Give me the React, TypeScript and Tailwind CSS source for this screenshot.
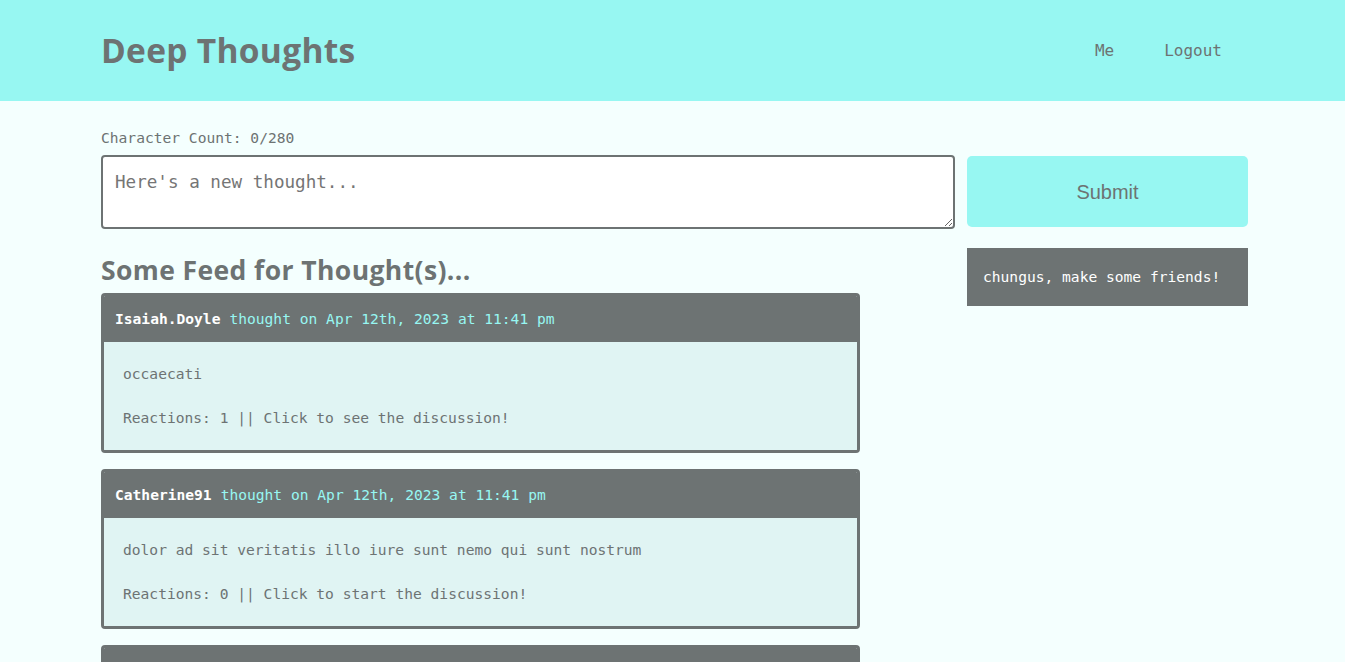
const thoughts = [
  {
    username: "Isaiah.Doyle",
    createdAt: "Apr 12th, 2023 at 11:41 pm",
    text: "occaecati",
    reactions: 1,
  },
  {
    username: "Catherine91",
    createdAt: "Apr 12th, 2023 at 11:41 pm",
    text: "dolor ad sit veritatis illo iure sunt nemo qui sunt nostrum",
    reactions: 0,
  },
  {
    username: "Kody_Hauck",
    createdAt: "Apr 12th, 2023 at 11:41 pm",
    text: "quia eos dolorum",
    reactions: 2,
  },
];

const mono = "font-['DejaVu_Sans_Mono','Liberation_Mono',monospace]";
const heading = "font-['Open_Sans','Lato',sans-serif]";

const Header = () => {
  return (
    <header className="bg-[#97f7f2] h-[101px]">
      <div className="ml-[101px] mr-[97px] h-full flex items-center justify-between">
        <h1 className={`${heading} text-[33.5px] font-bold text-[#6d7373] tracking-[0.3px]`}>
          Deep Thoughts
        </h1>
        <nav className={`${mono} text-[16px] text-[#6d7373] flex items-center pt-[1px]`}>
          <a className="mr-[50px] cursor-pointer">Me</a>
          <a className="mr-[26px] cursor-pointer">Logout</a>
        </nav>
      </div>
    </header>
  );
};

const ThoughtCard = ({ thought }: any) => {
  return (
    <div className="w-[759px] mb-[16px] rounded-[4px] border-[3px] border-[#6d7373] overflow-hidden">
      <div className={`${mono} bg-[#6d7373] h-[46px] flex items-center px-[11px] text-[14.6px]`}>
        <span className="text-white font-bold">{thought.username}</span>
        <span className="text-[#97f7f2] ml-[9px]">thought on {thought.createdAt}</span>
      </div>
      <div className={`${mono} bg-[#e0f4f3] text-[#6d7373] text-[14.6px] leading-[22px] pl-[19px] pt-[21px] pb-[21px]`}>
        <p>{thought.text}</p>
        <p className="mt-[22px]">
          Reactions: {thought.reactions} || Click to{" "}
          {thought.reactions ? "see" : "start"} the discussion!
        </p>
      </div>
    </div>
  );
};

export default function App() {
  return (
    <div className="bg-[#f4fffe] overflow-hidden h-[662px]">
      <Header />
      <main className="ml-[101px] mr-[97px] pt-[27px]">
        <p className={`${mono} text-[14.6px] text-[#6d7373] leading-[20px]`}>
          Character Count: 0/280
        </p>
        <div className="flex gap-[12px] mt-[7px]">
          <textarea
            placeholder="Here's a new thought..."
            className={`${mono} w-[854px] h-[74px] bg-white border-2 border-[#6d7373] rounded-[4px] px-[12px] py-[12px] text-[17.6px] leading-[26px] placeholder:text-[#757575] text-[#6d7373]`}
          />
          <button className="w-[281px] h-[71px] mt-[1px] bg-[#97f7f2] rounded-[5px] text-[#6d7373] text-[20px] font-['Liberation_Sans',Arial,sans-serif]">
            Submit
          </button>
        </div>
        <div className="flex gap-[107px] mt-[18px]">
          <div>
            <h2 className={`${heading} text-[26.5px] font-bold text-[#6d7373] leading-[30px] mt-[8px] mb-[8px] tracking-[0.4px]`}>
              Some Feed for Thought(s)...
            </h2>
            {thoughts.map((t, index) => (
              <ThoughtCard key={index} thought={t} />
            ))}
          </div>
          <div className={`${mono} w-[281px] h-[58px] mt-[1px] bg-[#6d7373] text-white text-[14.6px] flex items-center px-[16px] self-start`}>
            chungus, make some friends!
          </div>
        </div>
      </main>
    </div>
  );
}
